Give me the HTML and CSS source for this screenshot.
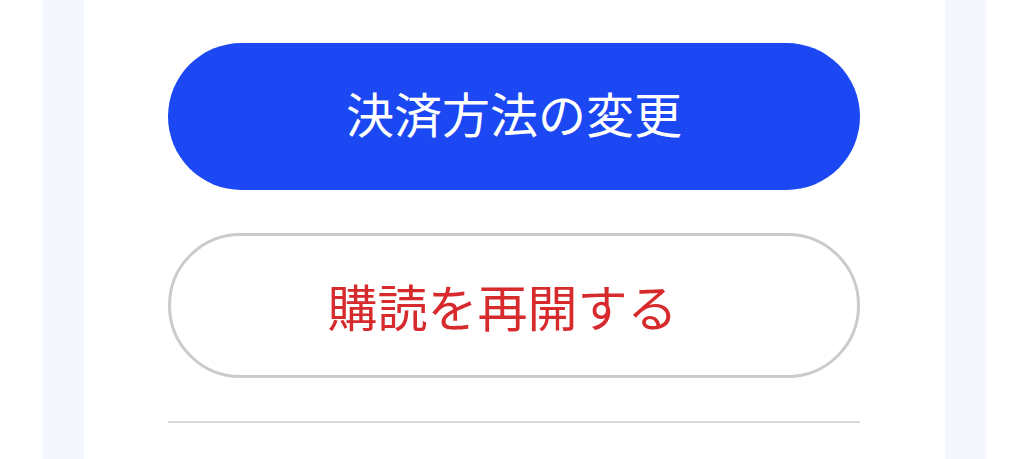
FILE: index.html
```html
<!DOCTYPE html>
<html lang="ja">
<head>
<meta charset="utf-8">
<link rel="stylesheet" href="styles.css">
</head>
<body>
<div class="frame">
  <div class="card">
    <button class="btn btn-primary">決済方法の変更</button>
    <button class="btn btn-outline"><span class="label">購読を再開する</span></button>
    <hr class="divider">
  </div>
</div>
</body>
</html>
```
FILE: styles.css
```css
html, body {
  margin: 0;
  padding: 0;
  background: #ffffff;
  height: 459px;
  overflow: hidden;
}
.frame {
  margin-left: 42px;
  width: 944px;
  height: 459px;
  box-sizing: border-box;
  padding: 0 41px 0 42px;
  background: #f4f7fd;
}
.card {
  background: #ffffff;
  height: 100%;
  box-sizing: border-box;
  padding: 43px 85px 0 84px;
  display: flex;
  flex-direction: column;
}
.btn {
  display: flex;
  align-items: center;
  justify-content: center;
  width: 100%;
  border-radius: 80px;
  font-family: "Noto Sans CJK JP", "Noto Sans", sans-serif;
  font-weight: 400;
  margin: 0;
  padding: 0;
  box-sizing: border-box;
}
.btn-primary {
  height: 147px;
  background: #1b48f2;
  border: none;
  color: #ffffff;
  font-size: 48px;
  line-height: 1;
  padding-bottom: 9px;
}
.btn-outline {
  height: 145px;
  margin-top: 43px;
  background: #ffffff;
  border: 3px solid #cbcbcb;
  color: #d62a2c;
  font-size: 50px;
  line-height: 1;
}
.btn-outline .label {
  margin-right: 23px;
  margin-bottom: 2px;
}
.divider {
  margin: 43px 0 0 0;
  border: none;
  height: 2px;
  background: #d8d8d8;
}
```
